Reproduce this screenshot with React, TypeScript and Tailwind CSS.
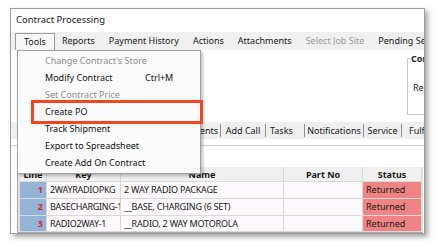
import React from 'react';

interface MenuEntry {
  label: string;
  disabled?: boolean;
  shortcut?: string;
}

interface Row {
  line: number;
  key: string;
  name: string;
  partNo: string;
  status: string;
}

const menus: MenuEntry[] = [
  { label: 'Reports' },
  { label: 'Payment History' },
  { label: 'Actions' },
  { label: 'Attachments' },
  { label: 'Select Job Site', disabled: true },
  { label: 'Pending Service' },
];

const toolItems: MenuEntry[] = [
  { label: "Change Contract's Store", disabled: true },
  { label: 'Modify Contract', shortcut: 'Ctrl+M' },
  { label: 'Set Contract Price', disabled: true },
  { label: 'Create PO' },
  { label: 'Track Shipment' },
  { label: 'Export to Spreadsheet' },
  { label: 'Create Add On Contract' },
];

const rows: Row[] = [
  { line: 1, key: '2WAYRADIOPKG', name: '2 WAY RADIO PACKAGE', partNo: '', status: 'Returned' },
  { line: 2, key: 'BASECHARGING-1', name: '__BASE, CHARGING (6 SET)', partNo: '', status: 'Returned' },
  { line: 3, key: 'RADIO2WAY-1', name: '__RADIO, 2 WAY MOTOROLA', partNo: '', status: 'Returned' },
];

// fixed widths so the visible tabs land where the form draws them
const tabs = [
  { label: 'Customer', w: 'w-[56px]' },
  { label: 'Items', w: 'w-[44px]' },
  { label: 'Payments', w: 'w-[58px]' },
  { label: 'Comments', w: 'w-[51px]' },
  { label: 'Add Call', w: 'w-[45px]' },
  { label: 'Tasks', w: 'w-[39px]', left: true },
  { label: 'Notifications', w: 'w-[59px]' },
  { label: 'Service', w: 'w-[38px]' },
  { label: 'Fulfillment', w: 'w-[60px]' },
];

function ToolsMenu() {
  return (
    <div className="absolute left-[6px] top-[41px] w-[184px] h-[124px] border border-[#a0a0a0] bg-[#fbfbfb] shadow-[2px_2px_3px_rgba(0,0,0,0.25)] py-[1px] z-10">
      {toolItems.map((item) => (
        <div key={item.label} className="flex items-center h-[17px] whitespace-nowrap">
          <div className="w-[27px] h-full shrink-0" />
          <span className={item.disabled ? 'text-[#8d8d8d] w-[100px] shrink-0' : 'text-[#111] w-[100px] shrink-0'}>
            {item.label}
          </span>
          {item.shortcut && <span className="text-[#111]">{item.shortcut}</span>}
        </div>
      ))}
    </div>
  );
}

function TabStrip() {
  return (
    <div className="flex h-[17px] bg-[#efefef] shrink-0 overflow-hidden">
      {tabs.map((t, i) => (
        <div
          key={t.label}
          className={`${t.w} shrink-0 flex items-center ${t.left ? 'justify-start pl-[4px]' : 'justify-center'} ${i > 0 ? 'border-l border-[#8f8f8f] my-[2px]' : ''} whitespace-nowrap`}
        >
          {t.label}
        </div>
      ))}
    </div>
  );
}

function LinesGrid() {
  const cell = 'border-r border-b border-[#d9d9d9] h-full flex items-center overflow-hidden whitespace-nowrap';
  return (
    <div className="ml-[6px] mr-[1px] border-l border-b border-[#a8a8a8] bg-[#e3e3e3] pl-[2px] pr-[1px] flex flex-col">
      <div className="flex h-[15px] bg-[#f0f0f0] font-bold">
        <div className={`${cell} w-[27px] justify-center pt-[2px]`}>Line</div>
        <div className={`${cell} w-[74px] justify-center pt-[2px]`}>Key</div>
        <div className={`${cell} w-[163px] justify-center pt-[2px]`}>Name</div>
        <div className={`${cell} w-[79px] justify-center pt-[2px]`}>Part No</div>
        <div className={`${cell} w-[59px] justify-center pt-[2px]`}>Status</div>
      </div>
      {rows.map((r, i) => (
        <div key={r.line} className={`flex ${i === 2 ? 'h-[16px]' : 'h-[17px]'} bg-[#fcf8fc]`}>
          <div className={`${cell} w-[27px] justify-end pr-[3px] bg-[#95b3d7] text-[#e3202a] font-bold`}>
            {r.line}
          </div>
          <div className={`${cell} w-[74px] pl-[3px] tracking-[-0.3px]`}>{r.key}</div>
          <div className={`${cell} w-[163px] pl-[3px] tracking-[-0.2px]`}>{r.name}</div>
          <div className={`${cell} w-[79px] pl-[3px]`}>{r.partNo}</div>
          <div className={`${cell} w-[59px] pl-[3px] bg-[#f08383]`}>{r.status}</div>
        </div>
      ))}
    </div>
  );
}

export default function App() {
  return (
    <div
      className="w-[435px] h-[246px] bg-white pl-[10px] pt-[8px] text-[9px] text-[#1a1a1a]"
      style={{ fontFamily: '"Noto Sans", "Open Sans", sans-serif' }}
    >
      <div className="relative w-[415px] h-[226px] border border-[#9c9c9c] bg-white shadow-[3px_3px_5px_rgba(0,0,0,0.35)]">
        <div className="w-full h-full overflow-hidden flex flex-col">
          <div className="h-[23px] flex items-center pl-[5px] text-[9.5px] shrink-0">Contract Processing</div>

          <div className="h-[18px] bg-[#f0f0f0] flex items-stretch pl-[4px] shrink-0 whitespace-nowrap">
            <div className="mt-[1px] px-[8px] flex items-center border border-b-0 border-[#9a9a9a] bg-[#f7f7f7]">
              Tools
            </div>
            {menus.map((m) => (
              <div
                key={m.label}
                className={`px-[7px] flex items-center ${m.disabled ? 'text-[#9a9a9a]' : ''}`}
              >
                {m.label}
              </div>
            ))}
          </div>

          <div className="flex h-[72px] shrink-0">
            <div className="w-[396px] shrink-0" />
            <div className="relative mt-[8px] h-[57px] w-[80px] shrink-0 border border-[#c8c8c8]">
              <span className="absolute -top-[7px] left-[2px] bg-white px-[1px] font-bold">Contract</span>
              <span className="absolute top-[22px] left-[5px]">Return</span>
            </div>
          </div>

          <TabStrip />
          <div className="mt-[6px] border-t border-[#d4d4d4] shrink-0" />
          <div className="mt-[21px]">
            <LinesGrid />
          </div>
        </div>

        <ToolsMenu />
        <div className="absolute left-[20px] top-[91px] w-[172px] h-[24px] border-[3px] border-[#ef4724] z-20" />
      </div>
    </div>
  );
}
